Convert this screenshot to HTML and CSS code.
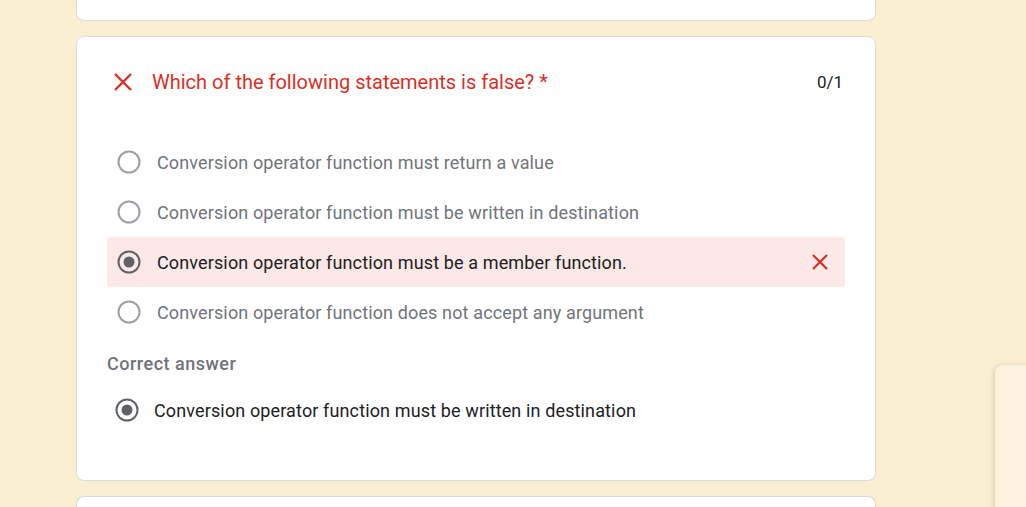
FILE: index.html
```html
<!DOCTYPE html>
<html>
<head>
<meta charset="utf-8">
<link rel="stylesheet" href="styles.css">
</head>
<body>
<div class="page">
  <div class="card card-top"></div>
  <div class="card card-main">
    <div class="title-row">
      <svg class="x-icon" width="20" height="20" viewBox="0 0 20 20"><path d="M2 2L18 18M18 2L2 18" stroke="#d93025" stroke-width="2.4" fill="none"/></svg>
      <div class="title">Which of the following statements is false? <span class="req">*</span></div>
      <div class="score">0/1</div>
    </div>
    <div class="options">
      <div class="opt">
        <svg class="radio" width="24" height="24" viewBox="0 0 24 24"><circle cx="12" cy="12" r="10.5" stroke="#9aa0a6" stroke-width="2" fill="none"/></svg>
        <span class="opt-text">Conversion operator function must return a value</span>
      </div>
      <div class="opt">
        <svg class="radio" width="24" height="24" viewBox="0 0 24 24"><circle cx="12" cy="12" r="10.5" stroke="#9aa0a6" stroke-width="2" fill="none"/></svg>
        <span class="opt-text">Conversion operator function must be written in destination</span>
      </div>
      <div class="opt opt-wrong">
        <svg class="radio" width="24" height="24" viewBox="0 0 24 24"><circle cx="12" cy="12" r="10.5" stroke="#5f6368" stroke-width="2" fill="none"/><circle cx="12" cy="12" r="5.5" fill="#5f6368"/></svg>
        <span class="opt-text sel">Conversion operator function must be a member function.</span>
        <svg class="x-small" width="18" height="18" viewBox="0 0 18 18"><path d="M2 2L16 16M16 2L2 16" stroke="#d93025" stroke-width="2.2" fill="none"/></svg>
      </div>
      <div class="opt">
        <svg class="radio" width="24" height="24" viewBox="0 0 24 24"><circle cx="12" cy="12" r="10.5" stroke="#9aa0a6" stroke-width="2" fill="none"/></svg>
        <span class="opt-text">Conversion operator function does not accept any argument</span>
      </div>
    </div>
    <div class="correct-label">Correct answer</div>
    <div class="correct-row">
      <svg class="radio" width="24" height="24" viewBox="0 0 24 24"><circle cx="12" cy="12" r="10.5" stroke="#5f6368" stroke-width="2" fill="none"/><circle cx="12" cy="12" r="5.5" fill="#5f6368"/></svg>
      <span class="opt-text sel">Conversion operator function must be written in destination</span>
    </div>
  </div>
  <div class="card card-bottom"></div>
</div>
<div class="side-panel"></div>
</body>
</html>
```

FILE: styles.css
```css
html, body {
  margin: 0;
  padding: 0;
  background: #fbefd2;
  font-family: Roboto, "Liberation Sans", Arial, sans-serif;
  overflow: hidden;
  height: 507px;
}
.page {
  width: 800px;
  margin-left: 76px;
  display: flex;
  flex-direction: column;
  gap: 15px;
}
.card {
  background: #fff;
  border: 1px solid #dadce0;
  border-radius: 8px;
  box-sizing: border-box;
}
.card-top {
  height: 21px;
  border-top: none;
  border-radius: 0 0 8px 8px;
}
.card-main {
  height: 445px;
  padding: 23px 30px 24px 30px;
}
.card-bottom {
  height: 11px;
  border-bottom: none;
  border-radius: 8px 8px 0 0;
}
.title-row {
  display: flex;
  align-items: center;
  height: 44px;
  padding: 0 2px 0 6px;
}
.x-icon {
  flex: none;
  margin-right: 19px;
}
.title {
  flex: 1;
  color: #d93025;
  font-size: 20px;
}
.score {
  color: #202124;
  font-size: 17px;
}
.options {
  margin-top: 33px;
  display: flex;
  flex-direction: column;
}
.opt {
  display: flex;
  align-items: center;
  height: 50px;
  padding: 0 16px 0 10px;
  border-radius: 4px;
}
.opt-wrong {
  background: #fce8e6;
}
.radio {
  flex: none;
  margin-right: 16px;
}
.opt-text {
  flex: 1;
  color: #70757a;
  font-size: 18px;
  letter-spacing: 0.13px;
}
.opt-text.sel {
  color: #202124;
}
.x-small {
  flex: none;
}
.correct-label {
  margin-top: 15px;
  color: #6f7378;
  font-size: 18px;
  font-weight: 500;
  letter-spacing: 0.5px;
  line-height: 24px;
}
.correct-row {
  display: flex;
  align-items: center;
  height: 48px;
  margin-top: 10px;
  padding-left: 8px;
}
.correct-row .radio {
  margin-right: 15px;
}
.side-panel {
  position: absolute;
  left: 995px;
  top: 365px;
  width: 60px;
  height: 200px;
  background: #fcf3de;
  border-radius: 8px 0 0 0;
  box-shadow: -2px 0 4px rgba(120, 100, 60, 0.18);
}
```
